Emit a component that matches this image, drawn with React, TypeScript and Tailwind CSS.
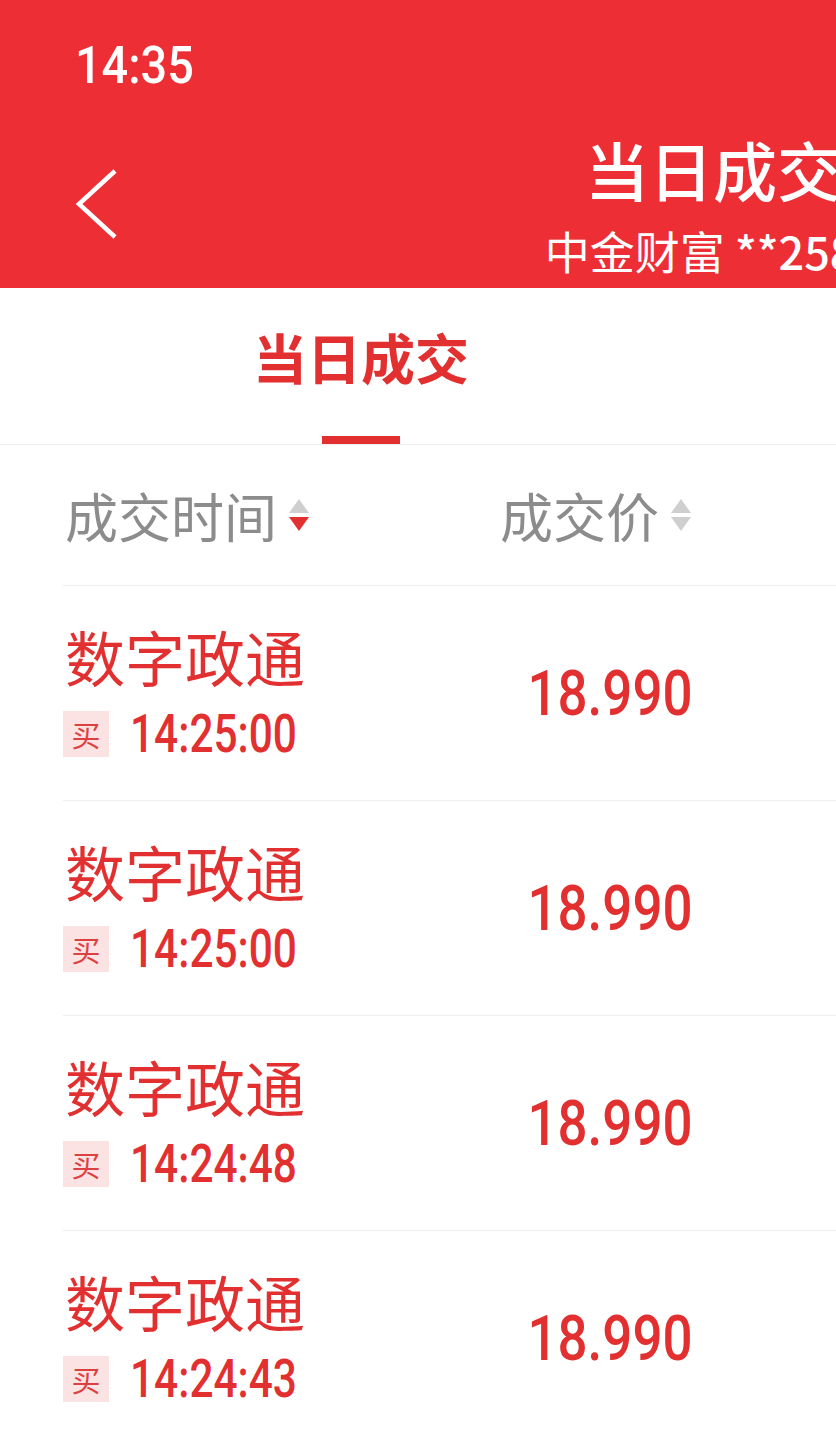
import React from "react";

const trades = [
  { name: "数字政通", side: "买", time: "14:25:00", price: "18.990" },
  { name: "数字政通", side: "买", time: "14:25:00", price: "18.990" },
  { name: "数字政通", side: "买", time: "14:24:48", price: "18.990" },
  { name: "数字政通", side: "买", time: "14:24:43", price: "18.990" },
];

const cjk = "font-['Noto_Sans_CJK_SC','Noto_Sans',sans-serif]";
const num = "font-['Roboto','Noto_Sans_CJK_SC',sans-serif]";

function SortIcon({ active }: { active?: boolean }) {
  return (
    <svg width="20" height="32" viewBox="0 0 20 32" className="ml-3 shrink-0">
      <path d="M10 0 L20 14 L0 14 Z" fill="#cfcfcf" />
      <path d="M0 18 L20 18 L10 32 Z" fill={active ? "#e23030" : "#cfcfcf"} />
    </svg>
  );
}

export default function App() {
  return (
    <div className="w-[836px] h-[1433px] overflow-hidden bg-white">
      {/* red header */}
      <header className="h-[288px] bg-[#ee2e35] flex flex-col overflow-hidden">
        <div className="h-[120px] pt-[40px] pl-[75px]">
          <span className={`inline-block origin-left scale-x-[0.9] text-white text-[52px] leading-none font-medium ${num}`}>
            14:35
          </span>
        </div>
        <div className="flex-1 flex items-center">
          <svg width="44" height="72" viewBox="0 0 44 72" className="ml-[75px] shrink-0">
            <path d="M40 3 L4 36 L40 69" fill="none" stroke="white" strokeWidth="4.5" />
          </svg>
          <div className="w-[1188px] shrink-0 flex flex-col items-center text-white whitespace-nowrap">
            <div className={`text-[64px] leading-none font-medium ${cjk}`}>当日成交</div>
            <div className={`mt-[28px] text-[45px] leading-none ${cjk}`}>
              中金财富 <span className="font-medium">**2586</span>
            </div>
          </div>
        </div>
      </header>

      {/* tabs */}
      <div className="h-[157px] border-b border-[#eeeeee]">
        <div className="w-[722px] flex flex-col items-center">
          <div className={`mt-[42px] text-[54px] leading-none font-bold text-[#e23030] ${cjk}`}>当日成交</div>
          <div className="mt-[52px] w-[78px] h-[8px] bg-[#e23030]" />
        </div>
      </div>

      {/* column header */}
      <div className={`h-[140px] ml-[63px] flex items-center text-[#8c8c8c] text-[53px] leading-none ${cjk}`}>
        <div className="w-[437px] flex items-center pl-[2px]">
          成交时间
          <SortIcon active />
        </div>
        <div className="flex items-center">
          成交价
          <SortIcon />
        </div>
      </div>

      {/* rows */}
      {trades.map((t, i) => (
        <div key={i} className="ml-[63px] h-[215px] border-t border-[#eeeeee] flex items-center">
          <div className="w-[400px] flex flex-col">
            <div className={`pl-[2px] text-[60px] leading-none text-[#e23030] ${cjk}`}>{t.name}</div>
            <div className="mt-[22px] flex items-center">
              <span className={`w-[46px] h-[46px] flex items-center justify-center bg-[#fce3e3] text-[#dd4040] text-[29px] leading-none ${cjk}`}>
                {t.side}
              </span>
              <span className={`ml-[21px] inline-block origin-left scale-x-[0.8] text-[53px] leading-none font-medium text-[#e23030] ${num}`}>
                {t.time}
              </span>
            </div>
          </div>
          <div className="w-[230px] flex justify-end">
            <span className={`inline-block origin-right scale-x-[0.84] text-[63px] leading-none font-medium text-[#e23030] ${num}`}>
              {t.price}
            </span>
          </div>
        </div>
      ))}
    </div>
  );
}
